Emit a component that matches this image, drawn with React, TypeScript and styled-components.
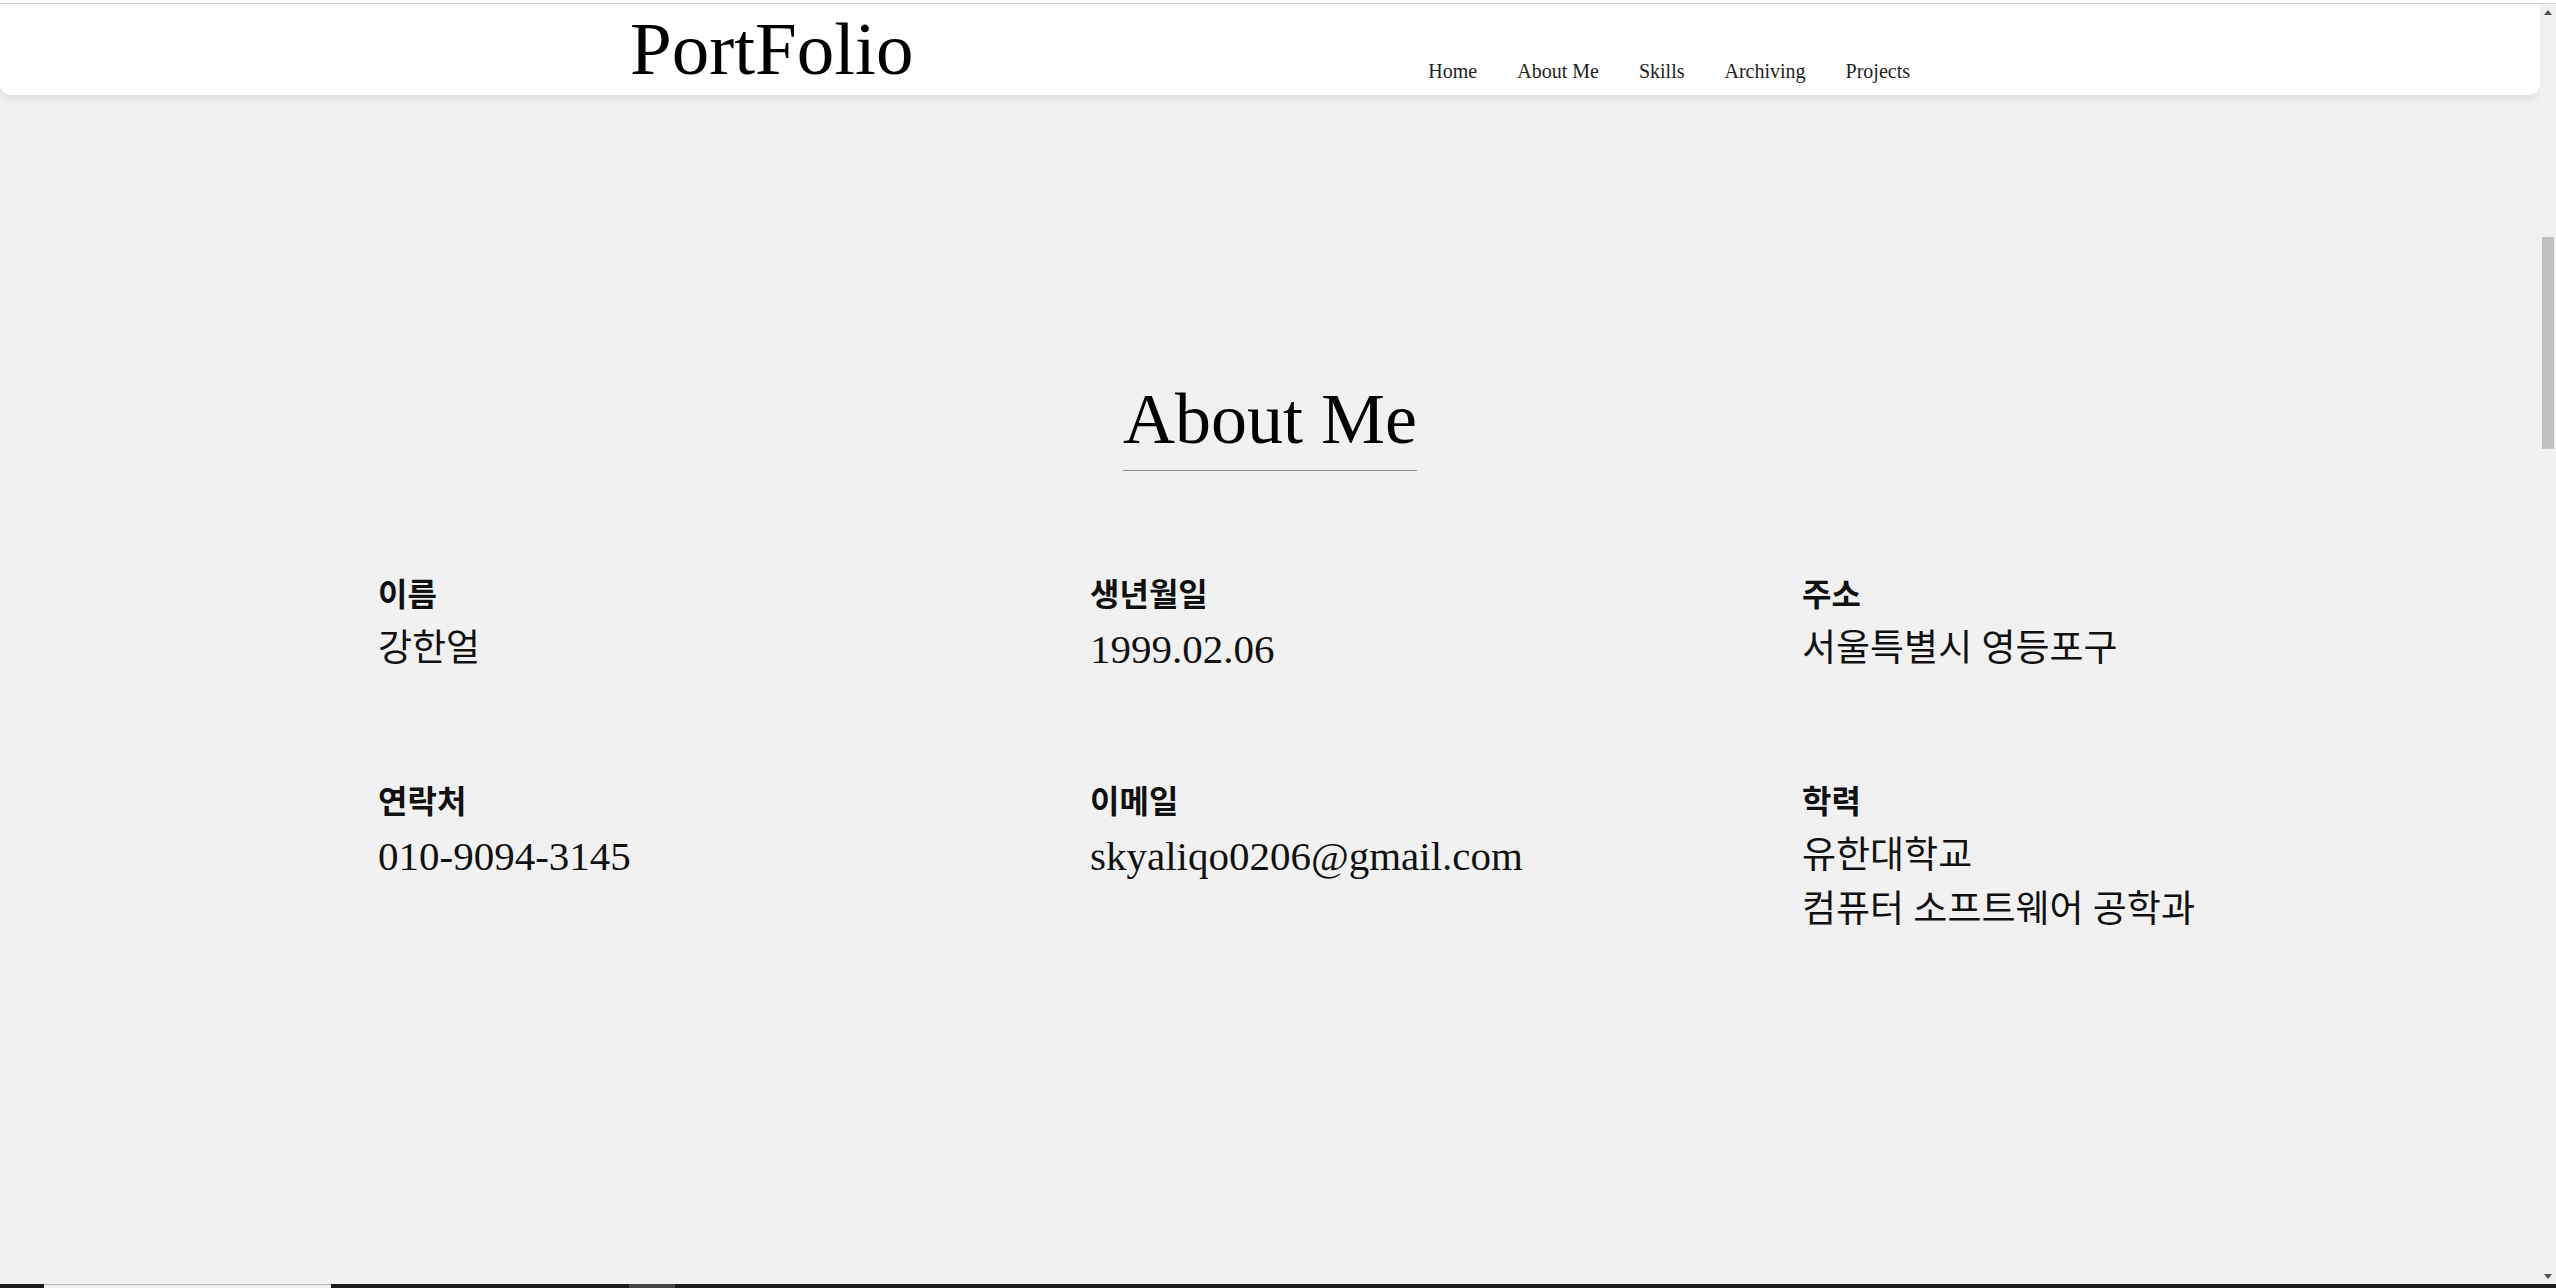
import React from "react";
import styled, { createGlobalStyle } from "styled-components";

const GlobalStyle = createGlobalStyle`
  html, body {
    margin: 0;
    padding: 0;
    background: #f1f1f1;
    overflow: hidden;
  }
  * { box-sizing: border-box; }
`;

const serif = `"Liberation Serif", "Noto Sans CJK KR", serif`;

const Screen = styled.div`
  width: 2556px;
  height: 1288px;
  display: flex;
  flex-direction: column;
  background: #f1f1f1;
  font-family: ${serif};
  color: #111;
`;

const TopStrip = styled.div`
  height: 4px;
  flex: none;
  background: #ffffff;
  border-bottom: 1px solid #cfcfcf;
`;

const Window = styled.div`
  flex: 1;
  display: flex;
  min-height: 0;
`;

const Viewport = styled.div`
  flex: 1;
  display: flex;
  flex-direction: column;
  min-width: 0;
`;

const Header = styled.header`
  height: 91px;
  flex: none;
  background: #ffffff;
  border-radius: 0 0 10px 10px;
  box-shadow: 0 4px 10px rgba(0, 0, 0, 0.08);
  padding-top: 7px;
`;

const HeaderInner = styled.div`
  max-width: 1280px;
  margin: 0 auto;
  display: flex;
  justify-content: space-between;
  align-items: flex-start;
`;

const Logo = styled.div`
  font-size: 75px;
  line-height: 76px;
  color: #000;
`;

const Nav = styled.nav`
  display: flex;
  gap: 40px;
  margin-top: 48px;
`;

const NavLink = styled.a`
  font-size: 20px;
  line-height: 24px;
  color: #222;
  text-decoration: none;
  cursor: pointer;
`;

const Section = styled.section`
  padding-top: 288px;
  display: flex;
  flex-direction: column;
  align-items: center;
`;

const Title = styled.h2`
  margin: 0;
  font-weight: 400;
  font-size: 72px;
  line-height: 72px;
  color: #000;
  padding-bottom: 15px;
  border-bottom: 1px solid #8a8a8a;
`;

const InfoGrid = styled.div`
  margin-top: 97px;
  display: grid;
  grid-template-columns: repeat(3, 360px);
  column-gap: 352px;
  row-gap: 99px;
`;

const Item = styled.div`
  display: flex;
  flex-direction: column;
`;

const Label = styled.div`
  font-size: 32px;
  line-height: 54px;
  font-weight: 700;
  white-space: nowrap;
`;

const Value = styled.div<{ $latin?: boolean }>`
  font-size: ${(p) => (p.$latin ? "41px" : "37px")};
  line-height: 54px;
  white-space: nowrap;
`;

const ScrollTrack = styled.div`
  width: 16px;
  flex: none;
  background: #f1f1f1;
  display: flex;
  flex-direction: column;
  align-items: center;
`;

const ArrowBtn = styled.div`
  height: 16px;
  width: 16px;
  display: flex;
  align-items: center;
  justify-content: center;
  flex: none;
`;

const Thumb = styled.div`
  margin-top: 217px;
  width: 12px;
  height: 212px;
  background: #c1c1c1;
  flex: none;
`;

const Spacer = styled.div`
  flex: 1;
`;

const Taskbar = styled.div`
  height: 4px;
  flex: none;
  background: #1c1c1e;
  display: flex;
`;

const TaskItem = styled.div<{ $w: number; $active?: boolean; $ml: number }>`
  margin-left: ${(p) => p.$ml}px;
  width: ${(p) => p.$w}px;
  background: ${(p) => (p.$active ? "#f0f0f0" : "#474747")};
  border-top: ${(p) => (p.$active ? "1px solid #b8b8b8" : "none")};
`;

const Triangle = ({ up }: { up?: boolean }) => (
  <svg width="8" height="5" viewBox="0 0 8 5">
    <polygon points={up ? "4,0 8,5 0,5" : "0,0 8,0 4,5"} fill="#505050" />
  </svg>
);

type Info = { label: string; values: string[]; latin?: boolean };

const infos: Info[] = [
  { label: "이름", values: ["강한얼"] },
  { label: "생년월일", values: ["1999.02.06"], latin: true },
  { label: "주소", values: ["서울특별시 영등포구"] },
  { label: "연락처", values: ["010-9094-3145"], latin: true },
  { label: "이메일", values: ["skyaliqo0206@gmail.com"], latin: true },
  { label: "학력", values: ["유한대학교", "컴퓨터 소프트웨어 공학과"] },
];

const navItems = ["Home", "About Me", "Skills", "Archiving", "Projects"];

export default function App() {
  return (
    <>
      <GlobalStyle />
      <Screen>
        <TopStrip />
        <Window>
          <Viewport>
            <Header>
              <HeaderInner>
                <Logo>PortFolio</Logo>
                <Nav>
                  {navItems.map((n) => (
                    <NavLink key={n}>{n}</NavLink>
                  ))}
                </Nav>
              </HeaderInner>
            </Header>
            <Section>
              <Title>About Me</Title>
              <InfoGrid>
                {infos.map((info) => (
                  <Item key={info.label}>
                    <Label>{info.label}</Label>
                    {info.values.map((v) => (
                      <Value key={v} $latin={info.latin}>
                        {v}
                      </Value>
                    ))}
                  </Item>
                ))}
              </InfoGrid>
            </Section>
          </Viewport>
          <ScrollTrack>
            <ArrowBtn>
              <Triangle up />
            </ArrowBtn>
            <Thumb />
            <Spacer />
            <ArrowBtn>
              <Triangle />
            </ArrowBtn>
          </ScrollTrack>
        </Window>
        <Taskbar>
          <TaskItem $ml={44} $w={287} $active />
          <TaskItem $ml={298} $w={46} />
        </Taskbar>
      </Screen>
    </>
  );
}
